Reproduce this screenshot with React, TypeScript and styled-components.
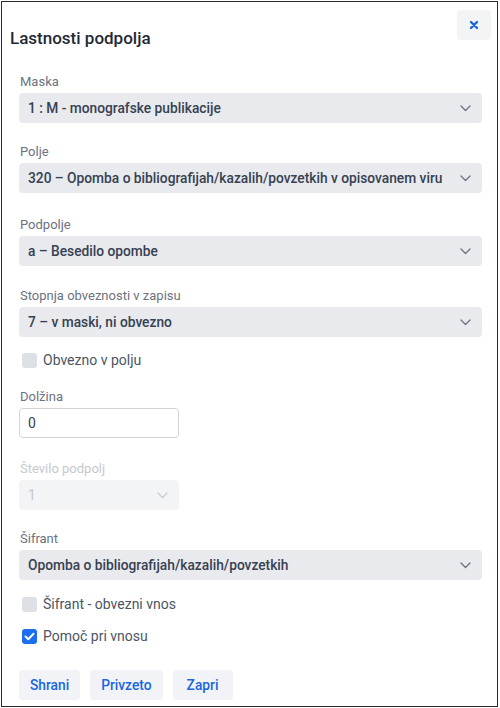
import styled, { createGlobalStyle } from "styled-components";

const GlobalStyle = createGlobalStyle`
  html, body {
    margin: 0;
    padding: 0;
    background: #ffffff;
  }
  body {
    font-family: Roboto, "Noto Sans", sans-serif;
  }
`;

const Frame = styled.div`
  box-sizing: border-box;
  margin: 1px 0 0 1px;
  width: 497px;
  height: 706px;
  border: 1px solid #2b2b2b;
  background: #fff;
  display: flex;
  flex-direction: column;
`;

const Header = styled.div`
  display: flex;
  justify-content: space-between;
  align-items: flex-start;
  padding: 8px 6px 0 8px;
`;

const Title = styled.h2`
  margin: 18px 0 0;
  font-size: 17px;
  font-weight: 500;
  color: #1f2937;
`;

const CloseButton = styled.button`
  width: 34px;
  height: 30px;
  border: none;
  border-radius: 4px;
  background: #f3f4f6;
  color: #1a66e0;
  display: flex;
  align-items: center;
  justify-content: center;
  padding: 0;
`;

const Body = styled.div`
  display: flex;
  flex-direction: column;
  padding: 0 15px 0 17px;
  margin-top: 24px;
`;

const Field = styled.div<{ $gap?: number }>`
  display: flex;
  flex-direction: column;
  margin-bottom: ${(p) => p.$gap ?? 20}px;
`;

const Label = styled.label<{ $disabled?: boolean }>`
  font-size: 13px;
  line-height: 19px;
  color: ${(p) => (p.$disabled ? "#c4c8ce" : "#6b7280")};
  margin-bottom: 2px;
  padding-left: 1px;
`;

const SelectBox = styled.div<{ $narrow?: boolean; $disabled?: boolean }>`
  box-sizing: border-box;
  height: 30px;
  width: ${(p) => (p.$narrow ? "160px" : "463px")};
  border-radius: 4px;
  background: ${(p) => (p.$disabled ? "#f3f4f6" : "#e8eaee")};
  display: flex;
  align-items: center;
  justify-content: space-between;
  padding: 0 11px 0 9px;
  font-size: 13.75px;
  white-space: nowrap;
`;

const SelectValue = styled.span<{ $disabled?: boolean }>`
  font-weight: ${(p) => (p.$disabled ? 400 : 500)};
  color: ${(p) => (p.$disabled ? "#c4c8ce" : "#374151")};
`;

const TextInput = styled.div`
  box-sizing: border-box;
  height: 30px;
  width: 160px;
  border: 1px solid #d1d5db;
  border-radius: 4px;
  background: #fff;
  display: flex;
  align-items: center;
  padding: 0 8px;
  font-size: 14px;
  color: #374151;
`;

const CheckRow = styled.div<{ $gap?: number }>`
  display: flex;
  align-items: center;
  gap: 6px;
  padding-left: 3px;
  margin-bottom: ${(p) => p.$gap ?? 0}px;
  font-size: 14px;
  color: #4b5563;
  height: 20px;
`;

const Box = styled.span<{ $checked?: boolean }>`
  box-sizing: border-box;
  width: 15px;
  height: 15px;
  border-radius: 3px;
  background: ${(p) => (p.$checked ? "#1a6ef0" : "#dde0e5")};
  display: flex;
  align-items: center;
  justify-content: center;
`;

const Actions = styled.div`
  display: flex;
  gap: 10px;
  margin-top: 24px;
`;

const ActionButton = styled.button`
  height: 30px;
  min-width: 60px;
  border: none;
  border-radius: 4px;
  background: #f1f3f6;
  color: #1a66e0;
  font-family: inherit;
  font-size: 13.75px;
  font-weight: 500;
  padding: 0 11px;
`;

const Chevron = ({ light }: { light?: boolean }) => (
  <svg width="11" height="7" viewBox="0 0 11 7" fill="none">
    <path
      d="M1 1l4.5 4.5L10 1"
      stroke={light ? "#c9cdd3" : "#6b7280"}
      strokeWidth="1.3"
      strokeLinecap="round"
      strokeLinejoin="round"
    />
  </svg>
);

const Check = () => (
  <svg width="11" height="9" viewBox="0 0 11 9" fill="none">
    <path
      d="M1.5 4.5l2.8 2.8L9.5 1.8"
      stroke="#fff"
      strokeWidth="2"
      strokeLinecap="round"
      strokeLinejoin="round"
    />
  </svg>
);

const selects = [
  { label: "Maska", value: "1 : M - monografske publikacije", gap: 19 },
  {
    label: "Polje",
    value: "320 – Opomba o bibliografijah/kazalih/povzetkih v opisovanem viru",
    gap: 22,
  },
  { label: "Podpolje", value: "a – Besedilo opombe", gap: 20 },
];

export default function App() {
  return (
    <>
      <GlobalStyle />
      <Frame>
        <Header>
          <Title>Lastnosti podpolja</Title>
          <CloseButton>
            <svg width="10" height="10" viewBox="0 0 10 10">
              <path
                d="M2 2l6 6M8 2l-6 6"
                stroke="#1a66e0"
                strokeWidth="2.4"
                strokeLinecap="round"
              />
            </svg>
          </CloseButton>
        </Header>
        <Body>
          {selects.map((s) => (
            <Field key={s.label} $gap={s.gap}>
              <Label>{s.label}</Label>
              <SelectBox>
                <SelectValue>{s.value}</SelectValue>
                <Chevron />
              </SelectBox>
            </Field>
          ))}
          <Field $gap={13}>
            <Label>Stopnja obveznosti v zapisu</Label>
            <SelectBox>
              <SelectValue>7 – v maski, ni obvezno</SelectValue>
              <Chevron />
            </SelectBox>
          </Field>
          <CheckRow $gap={17}>
            <Box />
            Obvezno v polju
          </CheckRow>
          <Field $gap={21}>
            <Label>Dolžina</Label>
            <TextInput>0</TextInput>
          </Field>
          <Field $gap={19}>
            <Label $disabled>Število podpolj</Label>
            <SelectBox $narrow $disabled>
              <SelectValue $disabled>1</SelectValue>
              <Chevron light />
            </SelectBox>
          </Field>
          <Field $gap={14}>
            <Label>Šifrant</Label>
            <SelectBox>
              <SelectValue>Opomba o bibliografijah/kazalih/povzetkih</SelectValue>
              <Chevron />
            </SelectBox>
          </Field>
          <CheckRow $gap={12}>
            <Box />
            Šifrant - obvezni vnos
          </CheckRow>
          <CheckRow>
            <Box $checked>
              <Check />
            </Box>
            Pomoč pri vnosu
          </CheckRow>
          <Actions>
            <ActionButton>Shrani</ActionButton>
            <ActionButton>Privzeto</ActionButton>
            <ActionButton>Zapri</ActionButton>
          </Actions>
        </Body>
      </Frame>
    </>
  );
}
